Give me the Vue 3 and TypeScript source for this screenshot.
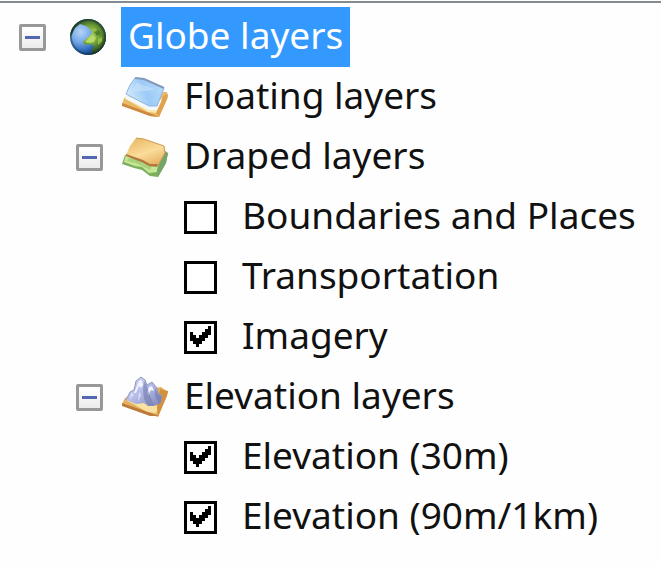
<script setup lang="ts">
import { reactive, ref } from 'vue'

type IconName = 'floating' | 'draped' | 'elevation'

interface Layer {
  id: string
  name: string
  visible: boolean
}

interface Group {
  id: IconName
  name: string
  open: boolean
  layers: Layer[]
}

const rootOpen = ref(true)
const selected = ref('globe')

const groups = reactive<Group[]>([
  { id: 'floating', name: 'Floating layers', open: false, layers: [] },
  {
    id: 'draped',
    name: 'Draped layers',
    open: true,
    layers: [
      { id: 'boundaries', name: 'Boundaries and Places', visible: false },
      { id: 'transportation', name: 'Transportation', visible: false },
      { id: 'imagery', name: 'Imagery', visible: true },
    ],
  },
  {
    id: 'elevation',
    name: 'Elevation layers',
    open: true,
    layers: [
      { id: 'elevation-30', name: 'Elevation (30m)', visible: true },
      { id: 'elevation-90', name: 'Elevation (90m/1km)', visible: true },
    ],
  },
])
</script>

<template>
  <main class="panel">
    <div class="row">
      <button
        class="toggle"
        :class="{ closed: !rootOpen }"
        type="button"
        aria-label="Globe layers"
        :aria-expanded="rootOpen"
        @click="rootOpen = !rootOpen"
      ></button>
      <svg class="icon globe" viewBox="0 0 36 36" aria-hidden="true">
        <defs>
          <radialGradient id="ocean" cx="0.3" cy="0.36" r="0.74">
            <stop offset="0" stop-color="#b4d4f8" />
            <stop offset="0.4" stop-color="#74a6e6" />
            <stop offset="0.72" stop-color="#2a66b6" />
            <stop offset="1" stop-color="#082850" />
          </radialGradient>
          <radialGradient id="land" gradientUnits="userSpaceOnUse" cx="20" cy="16" r="19">
            <stop offset="0" stop-color="#b4d65c" />
            <stop offset="0.5" stop-color="#6f9f38" />
            <stop offset="1" stop-color="#1c3814" />
          </radialGradient>
          <clipPath id="disc"><circle cx="18" cy="18" r="18" /></clipPath>
        </defs>
        <g clip-path="url(#disc)">
          <rect width="36" height="36" fill="url(#ocean)" />
          <path
            d="M10 0H30L36 10V26L30 34L22 36L22 31L24 27L20 25L15 26L13 23L17 19L21 16L22 13L20 10L16 7L10 5L5 9L2 15L0 18V8Z"
            fill="url(#land)"
          />
          <path d="M15 23L19 19L23 16L26 19L24 23L20 24Z" fill="#b8da66" />
          <path d="M21 10L25 9L27 13L24 15L22 13ZM28 20L32 18L32 22L28 26Z" fill="#93bb48" />
          <path d="M24 13L29 11L31 15L27 17Z" fill="#3d6e24" opacity="0.7" />
          <circle cx="18" cy="18" r="17" fill="none" stroke="#143340" stroke-width="2" opacity="0.5" />
        </g>
      </svg>
      <button
        class="name"
        :class="{ selected: selected === 'globe' }"
        type="button"
        @click="selected = 'globe'"
      >Globe layers</button>
    </div>

    <ul v-if="rootOpen" class="branch">
      <li v-for="group in groups" :key="group.id">
        <div class="row">
          <button
            v-if="group.layers.length"
            class="toggle"
            :class="{ closed: !group.open }"
            type="button"
            :aria-label="group.name"
            :aria-expanded="group.open"
            @click="group.open = !group.open"
          ></button>
          <span v-else class="spacer"></span>

          <svg v-if="group.id === 'floating'" class="icon" viewBox="0 0 48 42" aria-hidden="true">
            <defs>
              <linearGradient id="glass" x1="0" y1="0.6" x2="1" y2="0.3">
                <stop offset="0" stop-color="#d6ecfc" />
                <stop offset="0.5" stop-color="#9bcaf6" />
                <stop offset="1" stop-color="#b9dcfa" />
              </linearGradient>
            </defs>
            <path d="M3 22L22 15L46 16L47 21L38 41L29 40L1 29Z" fill="#e9ba6a" />
            <path d="M3 22L14 19L43 25L36 37L27 36Z" fill="#fbe8ae" />
            <path d="M1 27L31 38L38 41L29 40L1 30Z" fill="#cf873d" />
            <path d="M42 20L47 18L46 23L38 41L35 37Z" fill="#e0a34c" />
            <path d="M5 19L28 30L36 30L41 21L40 26L36 34L28 34L5 23Z" fill="#f3f8ff" />
            <path d="M14 2L23 3L43 12L41 18L36 30L28 30L5 18L9 9Z" fill="url(#glass)" />
            <path d="M14 2L23 3L43 12" fill="none" stroke="#8298bd" stroke-width="2" />
            <path d="M14 2L9 9L5 18L28 30L36 30L43 12" fill="none" stroke="#8fb4e0" stroke-width="1" />
            <path d="M11 15L16 7L34 13L25 15Z" fill="#c9e3fb" opacity="0.6" />
          </svg>

          <svg v-else-if="group.id === 'draped'" class="icon" viewBox="0 0 48 42" aria-hidden="true">
            <defs>
              <linearGradient id="cloth" x1="0.2" y1="0" x2="0.7" y2="1">
                <stop offset="0" stop-color="#e9b965" />
                <stop offset="0.55" stop-color="#fbdc9a" />
                <stop offset="1" stop-color="#e6b061" />
              </linearGradient>
            </defs>
            <path d="M4 19L40 12L47 17L45 27L37 41L29 40L21 34L13 32L1 28Z" fill="#7fae5e" />
            <path d="M5 19L36 27L39 25L36 36L28 37L21 31L14 30L3 26Z" fill="#c4e795" />
            <path d="M8 22L16 23L22 28L31 30L29 34L21 30L14 27L6 25Z" fill="#a6d27c" />
            <path d="M41 15L47 17L45 27L37 41L36 34Z" fill="#76a568" />
            <path d="M15 2L23 3L43 10L44 17L37 30L28 29L21 25L5 19L9 10Z" fill="url(#cloth)" />
            <path d="M5 18L22 24L29 28L37 28L36 31L28 30L20 26L5 20Z" fill="#b07a3e" />
            <path d="M15 2L23 3L43 10L44 17L37 29" fill="none" stroke="#cc9d57" stroke-width="1" />
          </svg>

          <svg v-else class="icon" viewBox="0 0 48 42" aria-hidden="true">
            <defs>
              <linearGradient id="rock" x1="0" y1="0" x2="1" y2="1">
                <stop offset="0" stop-color="#d6dafa" />
                <stop offset="0.5" stop-color="#b2b9e4" />
                <stop offset="1" stop-color="#7c84b6" />
              </linearGradient>
            </defs>
            <path d="M4 22L22 14L40 11L47 16L43 25L37 41L27 38L1 28Z" fill="#e4b15c" />
            <path d="M5 24L38 30L35 37L26 36Z" fill="#fae1a1" />
            <path d="M1 27L27 36L38 40L29 40L1 30Z" fill="#bd7a38" />
            <path d="M39 13L47 15L46 20L37 41L36 31Z" fill="#d3913f" />
            <path d="M5 24L9 16L13 14L15 5L20 1L24 4L26 9L31 6L36 12L37 17L41 20L40 27L33 30L27 30L23 27L15 28Z" fill="url(#rock)" />
            <path d="M18 5L21 4L22 9L20 12L18 10L15 17L13 17ZM28 11L31 10L33 15L30 14L27 20L26 16Z" fill="#f2f3ff" />
            <path d="M23 5L26 10L29 20L33 29L27 30L23 23L22 14ZM34 12L37 18L41 21L38 28L34 20Z" fill="#737daf" opacity="0.6" />
            <path d="M5 24L9 16L13 14L15 5L20 1L24 4L26 9L31 6L36 12L37 17L41 20" fill="none" stroke="#9298bd" stroke-width="1" />
            <path d="M10 17L13 18L9 24ZM18 16L20 19L17 26Z" fill="#dadefa" />
          </svg>

          <button
            class="name"
            :class="{ selected: selected === group.id }"
            type="button"
            @click="selected = group.id"
          >{{ group.name }}</button>
        </div>

        <ul v-if="group.open && group.layers.length" class="leaves">
          <li v-for="layer in group.layers" :key="layer.id" class="row leaf">
            <span class="check">
              <input :id="layer.id" v-model="layer.visible" type="checkbox" />
              <svg viewBox="0 0 33 33" aria-hidden="true">
                <path d="M6 11H9V14H12V17H15V14H18V11H21V8H24V5H27V14H24V17H21V20H18V23H15V26H12V23H9V20H6Z" />
              </svg>
            </span>
            <label class="name" :for="layer.id">{{ layer.name }}</label>
          </li>
        </ul>
      </li>
    </ul>
  </main>
</template>

<style>
body {
  background: #fefefe;
}
</style>

<style scoped>
.panel {
  border-top: 2px solid #868b90;
  margin-top: 1px;
  padding: 4px 0 16px 19px;
  color: #111;
  font-family: "Noto Sans", "Open Sans", sans-serif;
  font-size: 37px;
}

ul {
  margin: 0;
  padding: 0;
  list-style: none;
}

.branch {
  padding-left: 57px;
}

.leaves {
  padding-left: 108px;
}

.row {
  display: flex;
  align-items: center;
  height: 60px;
}

.toggle {
  box-sizing: border-box;
  display: grid;
  place-items: center;
  flex: none;
  width: 27px;
  height: 27px;
  margin: 0;
  padding: 0;
  border: 3px solid #989898;
  border-radius: 2px;
  background: linear-gradient(#fff, #ebebeb);
}

.toggle::before,
.toggle::after {
  content: "";
  grid-area: 1 / 1;
  width: 15px;
  height: 3px;
  background: #5366b0;
}

.toggle::after {
  display: none;
  width: 3px;
  height: 15px;
}

.toggle.closed::after {
  display: block;
}

.spacer {
  flex: none;
  width: 27px;
}

.icon {
  flex: none;
  width: 48px;
  height: 42px;
  margin: 0 8px 0 18px;
}

.globe {
  width: 36px;
  height: 36px;
  margin: 0 15px 0 24px;
}

.name {
  padding: 0 7px 4px;
  border: 0;
  background: none;
  color: inherit;
  font: inherit;
  line-height: 56px;
  white-space: nowrap;
}

.selected {
  background: #3399ff;
  color: #fff;
}

.leaf {
  gap: 18px;
}

.check {
  position: relative;
  display: flex;
  flex: none;
  width: 33px;
  height: 33px;
}

.check input {
  box-sizing: border-box;
  appearance: none;
  width: 100%;
  height: 100%;
  margin: 0;
  border: 3px solid #000;
  background: #fff;
}

.check svg {
  position: absolute;
  inset: 0;
  visibility: hidden;
  pointer-events: none;
}

.check input:checked + svg {
  visibility: visible;
}
</style>
